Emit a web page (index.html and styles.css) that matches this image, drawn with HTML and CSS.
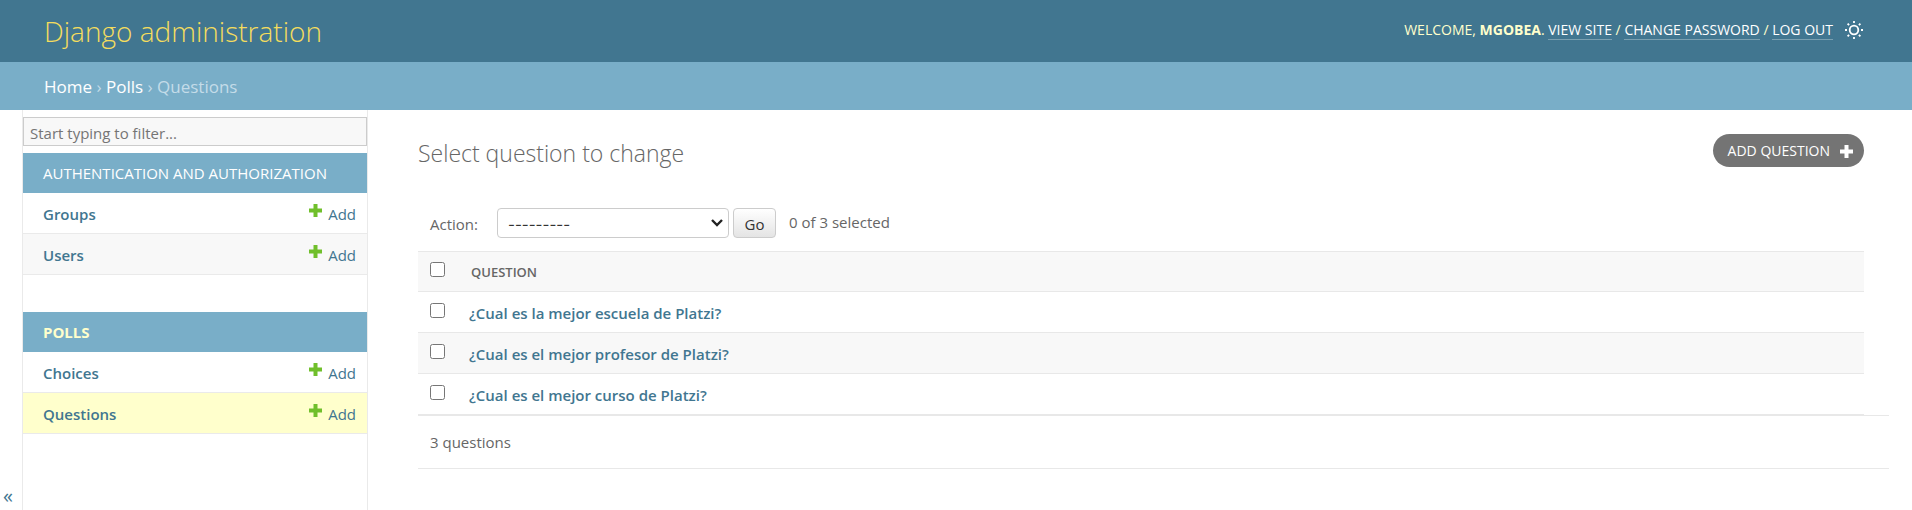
FILE: index.html
```html
<!DOCTYPE html>
<html lang="en">
<head>
<meta charset="utf-8">
<meta name="viewport" content="width=device-width, initial-scale=1">
<title>Select question to change | Django site admin</title>
<link rel="stylesheet" href="styles.css">
</head>
<body>
<svg class="defs" aria-hidden="true">
  <symbol id="plus" viewBox="0 0 13 13"><path d="M4.5 0h4v4.5H13v4H8.500V13h-4V8.500H0v-4h4.500z"/></symbol>
</svg>
<header class="header">
  <h1 class="branding"><a href="#">Django administration</a></h1>
  <div class="user-tools">
    <span>Welcome, <strong>mgobea</strong>. <a href="#">View site</a> / <a href="#">Change password</a> / <a href="#">Log out</a></span>
    <button class="theme-toggle" type="button" aria-label="Toggle theme">
      <svg viewBox="0 0 18 18" fill="none" stroke="currentColor" stroke-width="1.800"><circle cx="9" cy="9" r="4.300"/><path d="M9 0v2M9 16v2M0 9h2M16 9h2M2.600 2.600l1.500 1.500M13.900 13.900l1.500 1.500M2.600 15.400l1.500-1.500M13.900 4.100l1.500-1.500"/></svg>
    </button>
  </div>
</header>
<nav class="breadcrumbs" aria-label="Breadcrumbs"><a href="#">Home</a> › <a href="#">Polls</a> › Questions</nav>
<div class="main">
  <button class="toggle-nav" type="button" aria-label="Toggle navigation">«</button>
  <nav class="sidebar" aria-label="Sidebar">
    <input class="filter" type="search" placeholder="Start typing to filter..." aria-label="Filter navigation items">
    <table class="module">
      <caption><a href="#">Authentication and Authorization</a></caption>
      <tr><th scope="row"><a href="#">Groups</a></th><td><a class="add" href="#"><svg><use href="#plus"/></svg>Add</a></td></tr>
      <tr><th scope="row"><a href="#">Users</a></th><td><a class="add" href="#"><svg><use href="#plus"/></svg>Add</a></td></tr>
    </table>
    <table class="module current-app">
      <caption><a href="#">Polls</a></caption>
      <tr><th scope="row"><a href="#">Choices</a></th><td><a class="add" href="#"><svg><use href="#plus"/></svg>Add</a></td></tr>
      <tr class="current-model"><th scope="row"><a href="#">Questions</a></th><td><a class="add" href="#"><svg><use href="#plus"/></svg>Add</a></td></tr>
    </table>
  </nav>
  <main class="content">
    <div class="title-row">
      <h2>Select question to change</h2>
      <a class="add-link" href="#">Add question<svg><use href="#plus"/></svg></a>
    </div>
    <form class="changelist">
      <div class="actions">
        <label for="action">Action:</label>
        <select id="action"><option>---------</option><option>Delete selected questions</option></select>
        <button class="go" type="button">Go</button>
        <span class="counter">0 of 3 selected</span>
      </div>
      <table class="results">
        <thead><tr><th class="check" scope="col"><input type="checkbox" aria-label="Select all"></th><th scope="col">Question</th></tr></thead>
        <tbody>
          <tr><td class="check"><input type="checkbox" aria-label="Select row 1"></td><th scope="row"><a href="#">¿Cual es la mejor escuela de Platzi?</a></th></tr>
          <tr><td class="check"><input type="checkbox" aria-label="Select row 2"></td><th scope="row"><a href="#">¿Cual es el mejor profesor de Platzi?</a></th></tr>
          <tr><td class="check"><input type="checkbox" aria-label="Select row 3"></td><th scope="row"><a href="#">¿Cual es el mejor curso de Platzi?</a></th></tr>
        </tbody>
      </table>
      <p class="paginator">3 questions</p>
    </form>
  </main>
</div>
</body>
</html>
```

FILE: styles.css
```css
* { box-sizing: border-box; }
body {
  margin: 0;
  min-height: 100vh;
  display: flex;
  flex-direction: column;
  background: #fff;
  color: #666;
  font: 15px/20px "Segoe UI", "Open Sans", "Noto Sans", sans-serif;
}
a { color: #417690; text-decoration: none; }
button, input, select { font-family: inherit; }
.defs { display: none; }

.header {
  display: flex;
  align-items: center;
  justify-content: space-between;
  height: 62px;
  padding: 0 49px 2px 44px;
  background: #417690;
  color: #ffc;
}
.branding { margin: 0; padding-top: 2px; font-size: 28px; line-height: 40px; font-weight: 300; }
.branding a { color: #f5dd5d; }
.user-tools {
  display: flex;
  align-items: center;
  gap: 12px;
  font-size: 14px;
  text-transform: uppercase;
}
.user-tools strong { font-weight: 700; }
.user-tools a { color: #fff; border-bottom: 1px solid #7aa0b1; }
.theme-toggle { padding: 0; border: 0; background: none; color: #fff; }
.theme-toggle svg { display: block; width: 18px; height: 18px; }

.breadcrumbs {
  padding: 15px 44px 13px;
  background: #79aec8;
  color: #c4dce8;
  font-size: 17px;
}
.breadcrumbs a { color: #fff; }

.main { display: flex; flex: 1; }
.toggle-nav {
  width: 22px;
  padding: 0 6px 0 0;
  border: 0;
  background: none;
  color: #417690;
  font-size: 20px;
  line-height: 28px;
  display: flex;
  align-items: flex-end;
  justify-content: center;
}
.sidebar {
  width: 346px;
  flex: none;
  padding-top: 7px;
  border: solid #eaeaea;
  border-width: 0 1px;
}
.filter {
  display: block;
  width: 100%;
  height: 29px;
  margin-bottom: 7px;
  padding: 3px 6px 0;
  border: 1px solid #ccc;
  border-radius: 0;
  background: #f8f8f8;
  font-size: 15px;
  appearance: none;
}
.filter::placeholder { color: #757575; }
.module { width: 100%; margin-bottom: 37px; border-collapse: separate; border-spacing: 0; }
.module caption {
  padding: 10px 20px;
  background: #79aec8;
  text-align: left;
  text-transform: uppercase;
}
.module caption a { color: #fff; }
.current-app caption a { color: #ffc; font-weight: 700; }
.module th, .module td { border-bottom: 1px solid #eaeaea; vertical-align: top; }
.module tr:nth-child(even) { background: #f8f8f8; }
.module tr.current-model { background: #ffc; }
.module th { padding: 11px 20px 9px; font-weight: 600; text-align: left; }
.module td { padding: 11px 11px 9px 10px; }
.add { display: flex; justify-content: flex-end; gap: 6px; }
.add svg { width: 13px; height: 13px; fill: #70bf2b; }

.content { flex: 1; min-width: 0; padding: 24px 23px 40px 50px; }
.title-row {
  display: flex;
  justify-content: space-between;
  align-items: flex-start;
  margin: 0 25px 41px 0;
}
h2 { margin: 6px 0 0; font-size: 23px; line-height: 27px; font-weight: 300; }
.add-link {
  display: flex;
  align-items: center;
  gap: 10px;
  padding: 7px 11px 6px 15px;
  border-radius: 17px;
  background: #747474;
  color: #fff;
  font-size: 14px;
  text-transform: uppercase;
}
.add-link svg { width: 13px; height: 13px; fill: #fff; }

.actions { display: flex; align-items: center; padding: 0 12px 13px; }
.actions label { width: 67px; padding-top: 1px; }
.actions select {
  width: 232px;
  height: 30px;
  margin-right: 4px;
  padding: 2px 10px 0;
  border: 1px solid #ccc;
  border-radius: 4px;
  background: #fff url("data:image/svg+xml,%3Csvg xmlns='http://www.w3.org/2000/svg' width='12' height='8' fill='none' stroke='%23222' stroke-width='2.400'%3E%3Cpath d='M1 1l5 5 5-5'/%3E%3C/svg%3E") no-repeat right 5px center;
  color: #333;
  font-family: Inter, sans-serif;
  font-size: 15px;
  appearance: none;
}
.go {
  width: 43px;
  height: 30px;
  margin-right: 13px;
  padding: 2px 0 0;
  border: 1px solid #ccc;
  border-radius: 4px;
  background: linear-gradient(#fff, #e4e4e4);
  color: #333;
  font-size: 15px;
}
.counter { padding-bottom: 2px; }
.results { width: calc(100% - 25px); border-collapse: separate; border-spacing: 0; }
.results th, .results td { padding: 11px 12px 9px; border-bottom: 1px solid #e8e8e8; text-align: left; }
.results th { font-weight: 600; }
.results thead th { padding: 10px 14px 9px; border-top: 1px solid #e8e8e8; background: #f8f8f8; font-size: 13px; text-transform: uppercase; }
.results tbody tr:nth-child(even) { background: #f8f8f8; }
.results .check { width: 39px; vertical-align: top; }
.results thead .check { padding: 10px 12px 9px; }
.results input { display: block; width: 15px; height: 15px; margin: 0; }
.paginator {
  margin: 0;
  padding: 16px 12px;
  border: solid #e8e8e8;
  border-width: 1px 0;
}
```
